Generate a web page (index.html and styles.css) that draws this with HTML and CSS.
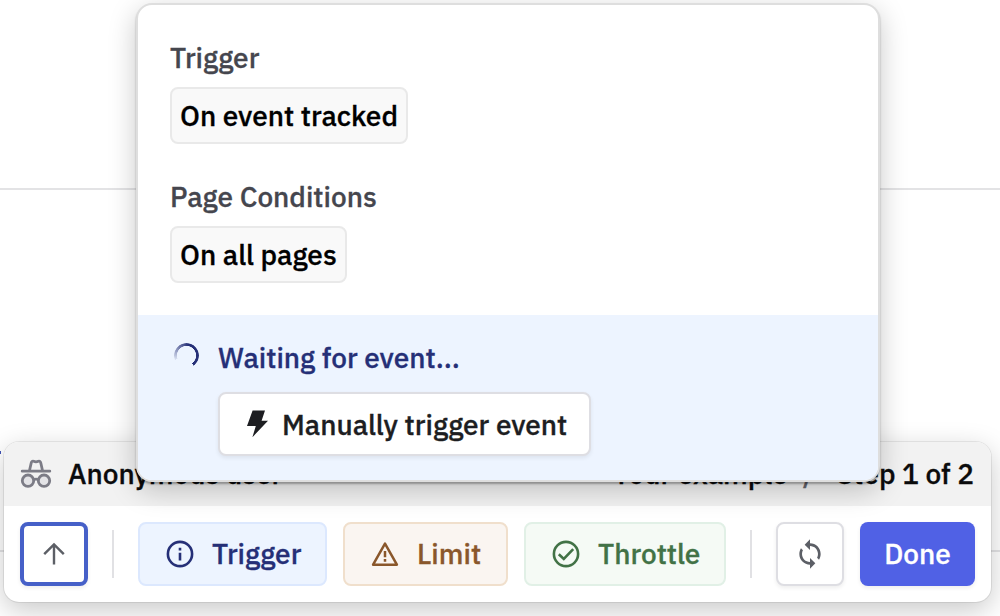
FILE: index.html
```html
<!DOCTYPE html>
<html lang="en">
<head>
<meta charset="utf-8">
<title>Step preview</title>
<link rel="stylesheet" href="styles.css">
</head>
<body>
<div class="stage">
  <div class="page-rule"></div>
  <div class="page-rule page-rule-low"></div>
  <div class="page-mark"></div>

  <section class="panel">
    <header class="panel-head">
      <svg class="incognito" width="32" height="30" viewBox="0 0 32 30" fill="none" stroke="#7c7c86" stroke-width="2.8" stroke-linecap="round" stroke-linejoin="round">
        <path d="M2.2 12.2H29.8M9.5 11.5L11.2 4Q11.8 1.5 13.7 2.3Q16 3.4 18.3 2.3Q20.2 1.5 20.8 4L22.5 11.5"/>
        <circle cx="8" cy="21.7" r="5.7" fill="#e4e4e7"/><circle cx="24" cy="21.7" r="5.7" fill="#e4e4e7"/>
        <path d="M13.8 20.6Q16 19.6 18.2 20.6"/>
      </svg>
      <span>Anonymous user</span>
      <span class="crumb">Your example</span>
      <span class="slash">/</span>
      <span>Step 1 of 2</span>
    </header>
    <div class="toolbar">
      <button class="btn square focused">
        <svg width="24" height="24" viewBox="0 0 24 24" fill="none" stroke="#5c5f66" stroke-width="2.4"><path d="M12 22.5V2.5M2.2 12.2L12 2.4L21.8 12.2"/></svg>
      </button>
      <i class="divider"></i>
      <button class="btn status info">
        <svg width="28" height="28" viewBox="0 0 28 28" fill="none" stroke="currentColor" stroke-width="2.6"><circle cx="14" cy="14" r="12.1"/><path d="M14 12.8V20.6M14 7.8V10.4"/></svg>
        <span>Trigger</span>
      </button>
      <button class="btn status warn">
        <svg width="28" height="28" viewBox="0 0 28 28" fill="none" stroke="currentColor" stroke-width="2.5"><path d="M14 3.6L25.9 24.7H2.1Z" stroke-linejoin="round"/><path d="M14 11V17.2M14 19V21.8"/></svg>
        <span>Limit</span>
      </button>
      <button class="btn status ok">
        <svg width="28" height="28" viewBox="0 0 28 28" fill="none" stroke="currentColor" stroke-width="2.6"><circle cx="14" cy="14" r="12.1"/><path d="M6.8 14.2L11.8 19L21.2 9.2"/></svg>
        <span>Throttle</span>
      </button>
      <i class="divider"></i>
      <button class="btn square">
        <svg width="32" height="32" viewBox="0 0 24 24" fill="#5c5f66"><path d="M12 4V1L8 5l4 4V6c3.31 0 6 2.69 6 6 0 1.01-.25 1.97-.7 2.8l1.46 1.46C19.54 15.03 20 13.57 20 12c0-4.42-3.58-8-8-8zm0 14c-3.31 0-6-2.69-6-6 0-1.01.25-1.97.7-2.8L5.24 7.74C4.46 8.97 4 10.43 4 12c0 4.42 3.58 8 8 8v3l4-4-4-4v3z"/></svg>
      </button>
      <button class="btn done"><span>Done</span></button>
    </div>
  </section>

  <section class="popover">
    <div class="conditions">
      <div class="field">
        <div class="label"><span>Trigger</span></div>
        <div class="chip"><span>On event tracked</span></div>
      </div>
      <div class="field">
        <div class="label"><span>Page Conditions</span></div>
        <div class="chip"><span>On all pages</span></div>
      </div>
    </div>
    <div class="waiting">
      <div class="spinner"></div>
      <div class="waiting-body">
        <div class="waiting-title"><span>Waiting for event...</span></div>
        <button class="btn manual">
          <svg width="22" height="28" viewBox="0 0 22 28" fill="#1d1e22"><path d="M6.6 0.6H19L15.6 10.8H22L6.4 27.2L9.8 16H1Z"/></svg>
          <span>Manually trigger event</span>
        </button>
      </div>
    </div>
  </section>
</div>
</body>
</html>
```
FILE: styles.css
```css
* { box-sizing: border-box; }
body {
  margin: 0;
  background: #fff;
  font: 500 28px/42px "IBM Plex Sans", "Open Sans", sans-serif;
  color: #000;
}
.stage { position: relative; width: 1000px; height: 616px; overflow: hidden; }
.page-rule { position: absolute; left: 0; right: 0; top: 188px; height: 2px; background: #e3e3e5; }
.page-rule-low { top: 550px; }
.page-mark { position: absolute; left: 0; top: 451px; width: 1px; height: 3px; background: #4052b5; }
span { white-space: nowrap; -webkit-text-stroke: 0.3px currentColor; }

.panel {
  position: absolute; left: 4px; top: 442px; width: 987px; height: 160px;
  border-radius: 15px; background: #fff;
  box-shadow: 0 0 0 1px rgba(0,0,0,.07), 0 8px 28px rgba(0,0,0,.22);
}
.panel-head {
  display: flex; align-items: center; height: 64px; padding: 0 17px 0 16px;
  background: #f2f2f2; border-radius: 15px 15px 0 0; color: #0b0b0c;
}
.incognito { margin-right: 16px; }
.crumb { margin-left: auto; }
.slash { margin: 0 22px 0 15px; color: #65656c; }
.toolbar { display: flex; align-items: center; padding: 16px; gap: 16px; }
.divider { width: 2px; height: 48px; background: #e1e1e4; margin: 0 8px; }

.btn {
  display: flex; align-items: center; justify-content: center; flex: none;
  height: 64px; padding: 0; border: 2px solid #dedee3; border-radius: 8px;
  background: #fff; font: inherit; color: #1d1e22;
  box-shadow: 0 2px 4px rgba(0,0,0,.07);
}
.square { width: 68px; }
.focused { border: 4px solid #4660c8; }
.status { justify-content: flex-start; padding-left: 26px; gap: 18px; box-shadow: none; }
.info { width: 189px; background: #edf4ff; border-color: #dce8fe; color: #252f77; }
.warn { width: 165px; background: #faf5f1; border-color: #f0dfcc; color: #8a572b; }
.ok { width: 202px; background: #f5faf5; border-color: #e1f0e6; color: #427246; }
.done { width: 115px; border: 0; background: #5061e5; color: #fff; }

.popover {
  position: absolute; left: 136px; top: 3px; width: 744px; height: 479px;
  border: 2px solid #dedede; border-radius: 16px; background: #fff; overflow: hidden;
  box-shadow: 0 2px 2px rgba(0,0,0,.3), 0 8px 28px rgba(0,0,0,.22);
}
.conditions { display: flex; flex-direction: column; gap: 32px; padding: 32px; }
.field { display: flex; flex-direction: column; align-items: flex-start; gap: 8px; }
.label { color: #45464e; }
.chip { height: 57px; padding: 6px 9px 0 8px; border: 2px solid #e9e9e9; border-radius: 8px; background: #f9f9f9; }
.field:first-child .chip { width: 238px; }
.field:last-child .chip { width: 177px; }
.waiting { display: flex; height: 165px; padding: 22px 32px 0 36px; gap: 19px; background: #edf4ff; }
.spinner {
  width: 25px; height: 25px; margin-top: 6px; border-radius: 50%;
  background: conic-gradient(from 250deg, rgba(37,47,119,.1), #252f77 120deg, #252f77 255deg, transparent 256deg);
  -webkit-mask: radial-gradient(circle, transparent 9.3px, #000 9.9px);
  mask: radial-gradient(circle, transparent 9.3px, #000 9.9px);
}
.waiting-title { color: #252f77; }
.manual { width: 373px; margin-top: 13px; justify-content: flex-start; padding-left: 26px; gap: 14px; }
.manual span { padding-top: 2px; }
```
